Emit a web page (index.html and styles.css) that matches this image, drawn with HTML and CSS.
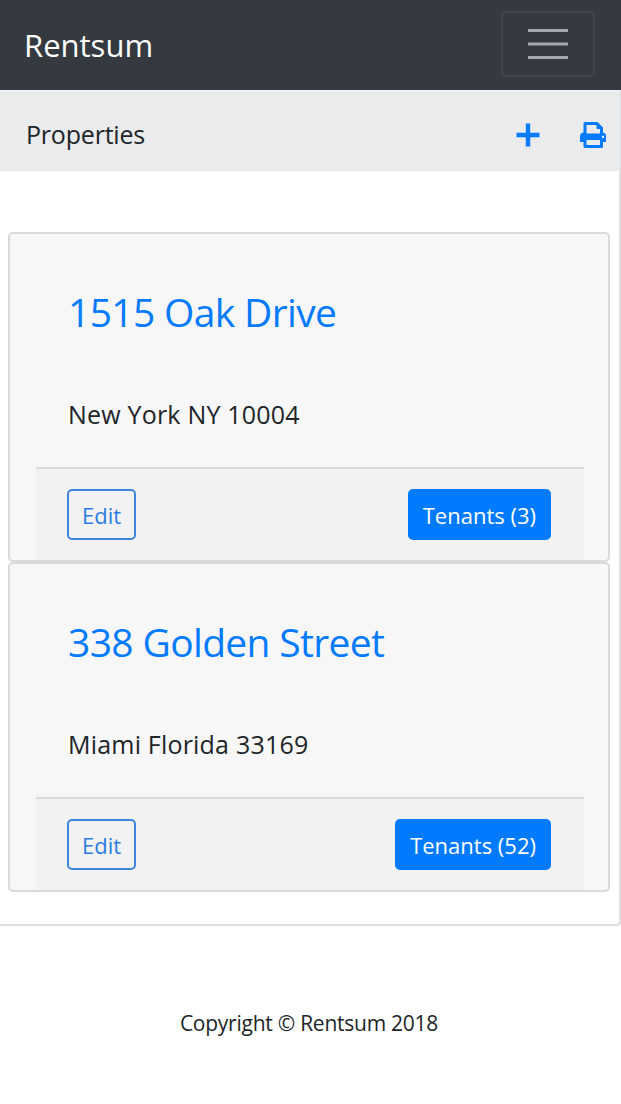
FILE: index.html
```html
<!DOCTYPE html>
<html lang="en">
<head>
    <meta charset="UTF-8">
    <meta name="viewport" content="width=device-width, initial-scale=1.0">
    <title>Rentsum</title>
    <link rel="stylesheet" href="styles.css">
</head>
<body>

<nav class="navbar">
    <a class="brand" href="#">Rentsum</a>
    <button class="toggler" type="button" aria-label="Toggle navigation">
        <svg width="42" height="32" viewBox="0 0 42 32">
            <path d="M1 2.5h40M1 16h40M1 29.5h40" stroke="#a3a8af" stroke-width="3"/>
        </svg>
    </button>
</nav>

<main class="panel">
    <div class="panel-header">
        <span class="panel-title">Properties</span>
        <div class="actions">
            <a href="#" aria-label="Add property">
                <svg width="24" height="24" viewBox="0 0 24 24">
                    <path d="M12 .5v23M.5 12h23" stroke="#007bff" stroke-width="4.4"/>
                </svg>
            </a>
            <a href="#" aria-label="Print">
                <svg width="28" height="28" viewBox="0 0 28 28">
                    <path fill="#007bff" fill-rule="evenodd" d="M4.5 2.5Q4.5 1 6 1H18.5L24 6.5V11.5Q27 12 27 15V20.5Q27 21 26.5 21H24V25.5Q24 27 22.5 27H6Q4.5 27 4.5 25.5V21H1.5Q1 21 1 20.5V15Q1 12 4.5 11.5ZM7.5 4V12.5H21V8H18.5Q17.5 8 17.5 7V4ZM7.5 19V24H21V19ZM24 14.5A1.2 1.2 0 1 0 24 16.900A1.2 1.2 0 1 0 24 14.5Z"/>
                </svg>
            </a>
        </div>
    </div>

    <div class="panel-body">
        <div class="card">
            <h2 class="card-title"><a href="#">1515 Oak Drive</a></h2>
            <p class="address">New York NY 10004</p>
            <div class="card-footer">
                <a class="btn btn-outline" href="#">Edit</a>
                <a class="btn btn-primary" href="#">Tenants (3)</a>
            </div>
        </div>

        <div class="card">
            <h2 class="card-title"><a href="#">338 Golden Street</a></h2>
            <p class="address">Miami Florida 33169</p>
            <div class="card-footer">
                <a class="btn btn-outline" href="#">Edit</a>
                <a class="btn btn-primary" href="#">Tenants (52)</a>
            </div>
        </div>
    </div>
</main>

<footer class="footer">
    <p>Copyright © Rentsum 2018</p>
</footer>

</body>
</html>
```

FILE: styles.css
```css
* {
    box-sizing: border-box;
}

body {
    margin: 0;
    font-family: "Open Sans", "Noto Sans", sans-serif;
    font-size: 25px;
    color: #212529;
    background: #ffffff;
}

a {
    color: #007bff;
    text-decoration: none;
}

/* Top bar */
.navbar {
    display: flex;
    justify-content: space-between;
    align-items: center;
    height: 90px;
    padding: 0 26px 2px 24px;
    background: #343a40;
}

.brand {
    padding-top: 2px;
    color: #ffffff;
    font-size: 31px;
}

.toggler {
    display: flex;
    justify-content: center;
    align-items: center;
    width: 94px;
    height: 66px;
    padding: 0;
    background: none;
    border: 2px solid #40464d;
    border-radius: 4px;
}

/* Outer panel */
.panel {
    height: 836px;
    border: 2px solid #dfdfdf;
    border-top: 1px solid #eef3f8;
    border-left: 0;
    border-radius: 0 0 4px 0;
}

.panel-header {
    display: flex;
    justify-content: space-between;
    align-items: center;
    height: 80px;
    margin-right: -1px;
    padding: 7px 13px 0 26px;
    background: #e9ebec;
    border-top: 1px solid #e9f0f6;
}

.panel-title {
    margin-top: -2px;
    letter-spacing: -0.2px;
}

.actions {
    display: flex;
    align-items: center;
    gap: 39px;
}

.actions a {
    display: flex;
}

.panel-body {
    padding: 61px 9px 0 8px;
}

/* Property cards */
.card {
    display: flex;
    flex-direction: column;
    height: 330px;
    padding: 0 24px 0 26px;
    background: #f7f7f7;
    border: 2px solid #dadada;
    border-radius: 5px;
}

.card-title {
    margin: 51px 0 0 32px;
    font-size: 39px;
    font-weight: 400;
    line-height: 54px;
    letter-spacing: -0.65px;
    white-space: nowrap;
}

.address {
    margin: 56px 0 0 32px;
    line-height: 38px;
    letter-spacing: 0.2px;
    white-space: nowrap;
}

.card-footer {
    display: flex;
    justify-content: space-between;
    align-items: flex-start;
    flex: 1;
    margin-top: 34px;
    padding: 20px 33px 0 31px;
    background: #f2f2f2;
    border-top: 2px solid #dadada;
}

.btn {
    height: 51px;
    padding: 0 13px;
    border: 2px solid #007bff;
    border-radius: 5px;
    font-size: 22px;
    line-height: 49px;
    white-space: nowrap;
}

.btn-outline {
    border-color: #3d86dd;
    color: #2b7de0;
}

.btn-primary {
    background: #007bff;
    color: #ffffff;
}

/* Footer */
.footer {
    padding: 82px 3px 0 0;
    font-size: 21px;
    line-height: 30px;
    letter-spacing: -0.25px;
    text-align: center;
}

.footer p {
    margin: 0;
}
```
